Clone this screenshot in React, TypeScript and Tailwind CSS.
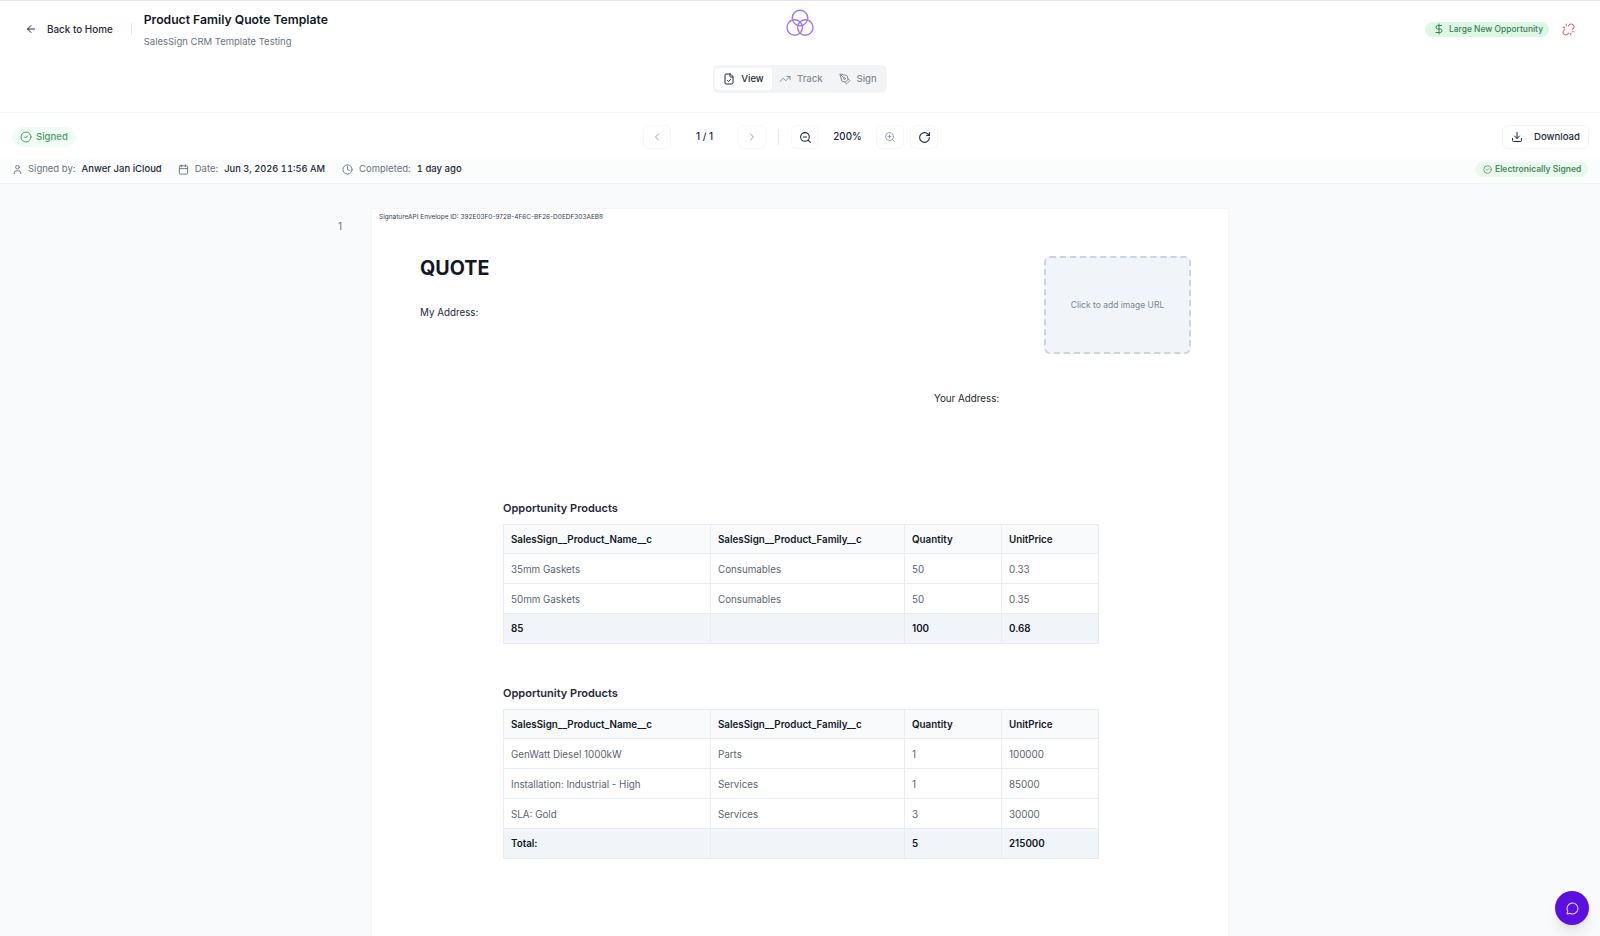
import {
  ArrowLeft,
  Calendar,
  ChevronLeft,
  ChevronRight,
  CircleCheck,
  Clock,
  DollarSign,
  Download,
  FileCheck,
  MessageCircle,
  PenTool,
  RotateCw,
  TrendingUp,
  Unlink,
  User,
  ZoomIn,
  ZoomOut,
} from "lucide-react";

const font = { fontFamily: "Inter, sans-serif" };

const ToolButton = ({ children, dim }: { children: React.ReactNode; dim?: boolean }) => (
  <div
    className={`w-7 h-6 flex items-center justify-center rounded-md border border-[#f7f7f7] bg-white ${
      dim ? "text-gray-400" : "text-gray-800"
    }`}
  >
    {children}
  </div>
);

const DataTable = ({ rows, total }: { rows: string[][]; total: string[] }) => (
  <div className="w-[596px] border border-[#e9ecf0] text-[9.8px]">
    <Row cells={["SalesSign__Product_Name__c", "SalesSign__Product_Family__c", "Quantity", "UnitPrice"]} className="h-[29px] bg-[#f8fafc] font-semibold text-[#111827] border-b border-[#e9ecf0]" />
    {rows.map((r) => (
      <Row key={r[0]} cells={r} body className="h-[30px] bg-white text-[#5b6472] border-b border-[#e9ecf0]" />
    ))}
    <Row cells={total} className="h-[29px] bg-[#f1f5f9] font-semibold text-[#111827]" />
  </div>
);

const Row = ({ cells, className, body }: { cells: string[]; className: string; body?: boolean }) => (
  <div className={`grid grid-cols-[207px_194px_97px_1fr] ${className}`}>
    {cells.map((c, i) => (
      <div key={i} className={`flex items-center pl-[7px] ${body ? "pt-[4px]" : "pt-[2px]"} ${i < 3 ? "border-r border-[#e9ecf0]" : ""}`}>
        {c}
      </div>
    ))}
  </div>
);

export default function App() {
  return (
    <div className="h-[936px] w-[1600px] overflow-hidden bg-[#f9fafb] flex flex-col relative" style={font}>
      <header className="h-[113px] bg-white border-t border-t-[#e5e7eb] border-b border-b-[#f3f4f6] relative shrink-0 px-6">
        <div className="flex items-start pt-[11px]">
          <div className="flex items-center h-[34px] text-[9.9px] font-medium text-[#1f2937]">
            <ArrowLeft size={12} className="ml-[1px] mr-[10px]" />
            Back to Home
            <div className="w-px h-3 bg-gray-200 ml-[18px]" />
          </div>
          <div className="ml-[12px]">
            <div className="text-[12.2px] font-semibold text-[#111827] leading-[16px]">Product Family Quote Template</div>
            <div className="text-[9.5px] text-[#6b7280] mt-[7px] leading-[14px]">SalesSign CRM Template Testing</div>
          </div>
          <div className="ml-auto flex items-center h-[34px]">
            <div className="flex items-center gap-[4px] h-[15px] w-[124px] pl-[8px] rounded-full bg-[#dcf7e4] text-[#3f7d58] text-[8.45px] font-medium whitespace-nowrap">
              <DollarSign size={12} />
              Large New Opportunity
            </div>
            <Unlink size={13} className="text-[#dc6b6b] ml-[13px] mr-[1px]" />
          </div>
        </div>
        <svg className="absolute left-[785px] top-[8px] w-[30px] h-[28px]" viewBox="0 0 30 28" fill="none" stroke="#9f7aea" strokeWidth="1.4">
          <circle cx="15" cy="9" r="7.7" />
          <circle cx="9.7" cy="18.5" r="7.7" />
          <circle cx="20.3" cy="18.5" r="7.7" />
        </svg>
        <div className="absolute left-[713px] top-[64px] w-[174px] h-7 rounded-md bg-[#f3f4f6] flex items-center px-[2px] text-[9.5px] font-medium text-[#888c94]">
          <div className="w-[57px] h-[22px] rounded bg-white text-[#1f2937] flex items-center justify-center gap-[6px]">
            <FileCheck size={12} />
            View
          </div>
          <div className="flex items-center gap-[6px] ml-[7px]">
            <TrendingUp size={12} />
            Track
          </div>
          <div className="flex items-center gap-[6px] ml-[16px]">
            <PenTool size={12} />
            Sign
          </div>
        </div>
      </header>

      <div className="h-[46px] bg-white shrink-0 flex items-center pt-[2px] px-3 relative">
        <div className="flex items-center gap-[4px] h-5 w-[64px] pl-2 rounded-full bg-[#f0fdf4] text-[#4d9a66] text-[9.6px] font-medium">
          <CircleCheck size={12} />
          Signed
        </div>
        <div className="absolute left-[643px] top-[12px] flex items-center text-[9.8px] font-medium text-[#1f2937]">
          <ToolButton dim><ChevronLeft size={12} /></ToolButton>
          <div className="w-[67px] text-center">1 / 1</div>
          <ToolButton dim><ChevronRight size={12} /></ToolButton>
          <div className="w-px h-4 bg-gray-200 mx-[12px]" />
          <ToolButton><ZoomOut size={13} /></ToolButton>
          <div className="w-[57px] text-center">200%</div>
          <ToolButton dim><ZoomIn size={12} /></ToolButton>
          <div className="w-[6px]" />
          <ToolButton><RotateCw size={13} /></ToolButton>
        </div>
        <div className="ml-auto mr-[-1px] w-[87px] h-6 flex items-center justify-center gap-[11px] rounded-md border border-[#f3f4f6] text-[9.6px] font-medium text-[#1f2937]">
          <Download size={12} />
          Download
        </div>
      </div>

      <div className="h-[25px] pb-[4px] bg-[#fbfdfc] border-b border-[#f3f4f6] shrink-0 flex items-center px-3 text-[9.5px] text-[#6b7280]">
        <User size={11} className="mr-[5px]" />
        Signed by:
        <span className="ml-[6px] font-medium text-[#1f2937]">Anwer Jan iCloud</span>
        <Calendar size={11} className="ml-[16px] mr-[6px]" />
        Date:
        <span className="ml-[6px] font-medium text-[#1f2937] tabular-nums text-[9.3px]">Jun 3, 2026 11:56 AM</span>
        <Clock size={11} className="ml-[17px] mr-[6px]" />
        Completed:
        <span className="ml-[6px] font-medium text-[#1f2937] tabular-nums">1 day ago</span>
        <div className="ml-auto flex items-center gap-[3px] h-[15px] w-[113px] pl-[8px] rounded-full bg-[#e9f9ee] text-[#4d8a62] text-[8.5px] font-semibold whitespace-nowrap">
          <CircleCheck size={9} />
          Electronically Signed
        </div>
      </div>

      <main className="flex-1 relative pt-[24px] pl-[371px]">
        <div className="absolute left-[338px] top-[35px] text-[10px] text-[#6b7280]">1</div>
        <div className="w-[858px] h-[800px] bg-white border border-[#f5f6f7] relative">
          <div className="pl-[7px] pt-[4px] text-[6.5px] leading-[9px] text-[#374151]">
            SignatureAPI Envelope ID: 392E03F0-972B-4F6C-BF26-D0EDF303AEB8
          </div>
          <div className="flex pl-[48px] pt-[34px] pr-[37px]">
            <div>
              <div className="text-[19.7px] leading-[24px] font-bold text-[#111827]">QUOTE</div>
              <div className="text-[9.8px] text-[#1f2937] mt-[26px]">My Address:</div>
            </div>
            <div className="ml-auto w-[147px] h-[98px] rounded-md border-2 border-dashed border-[#cbd5e1] bg-[#f1f5f9] flex items-center justify-center text-[8.5px] text-[#7b8494]">
              Click to add image URL
            </div>
          </div>
          <div className="pl-[562px] mt-[38px] text-[9.8px] text-[#1f2937] leading-[14px]">Your Address:</div>
          <div className="pl-[131px] mt-[94px]">
            <div className="text-[11px] font-semibold text-[#1f2937] leading-[16px] mb-[8px]">Opportunity Products</div>
            <DataTable
              rows={[
                ["35mm Gaskets", "Consumables", "50", "0.33"],
                ["50mm Gaskets", "Consumables", "50", "0.35"],
              ]}
              total={["85", "", "100", "0.68"]}
            />
            <div className="text-[11px] font-semibold text-[#1f2937] leading-[16px] mt-[41px] mb-[8px]">Opportunity Products</div>
            <DataTable
              rows={[
                ["GenWatt Diesel 1000kW", "Parts", "1", "100000"],
                ["Installation: Industrial - High", "Services", "1", "85000"],
                ["SLA: Gold", "Services", "3", "30000"],
              ]}
              total={["Total:", "", "5", "215000"]}
            />
          </div>
        </div>
      </main>

      <div className="absolute left-[1555px] top-[891px] w-[34px] h-[34px] rounded-full bg-[#5b10e0] shadow-lg flex items-center justify-center text-[#e9d5ff]">
        <MessageCircle size={13} />
      </div>
    </div>
  );
}
